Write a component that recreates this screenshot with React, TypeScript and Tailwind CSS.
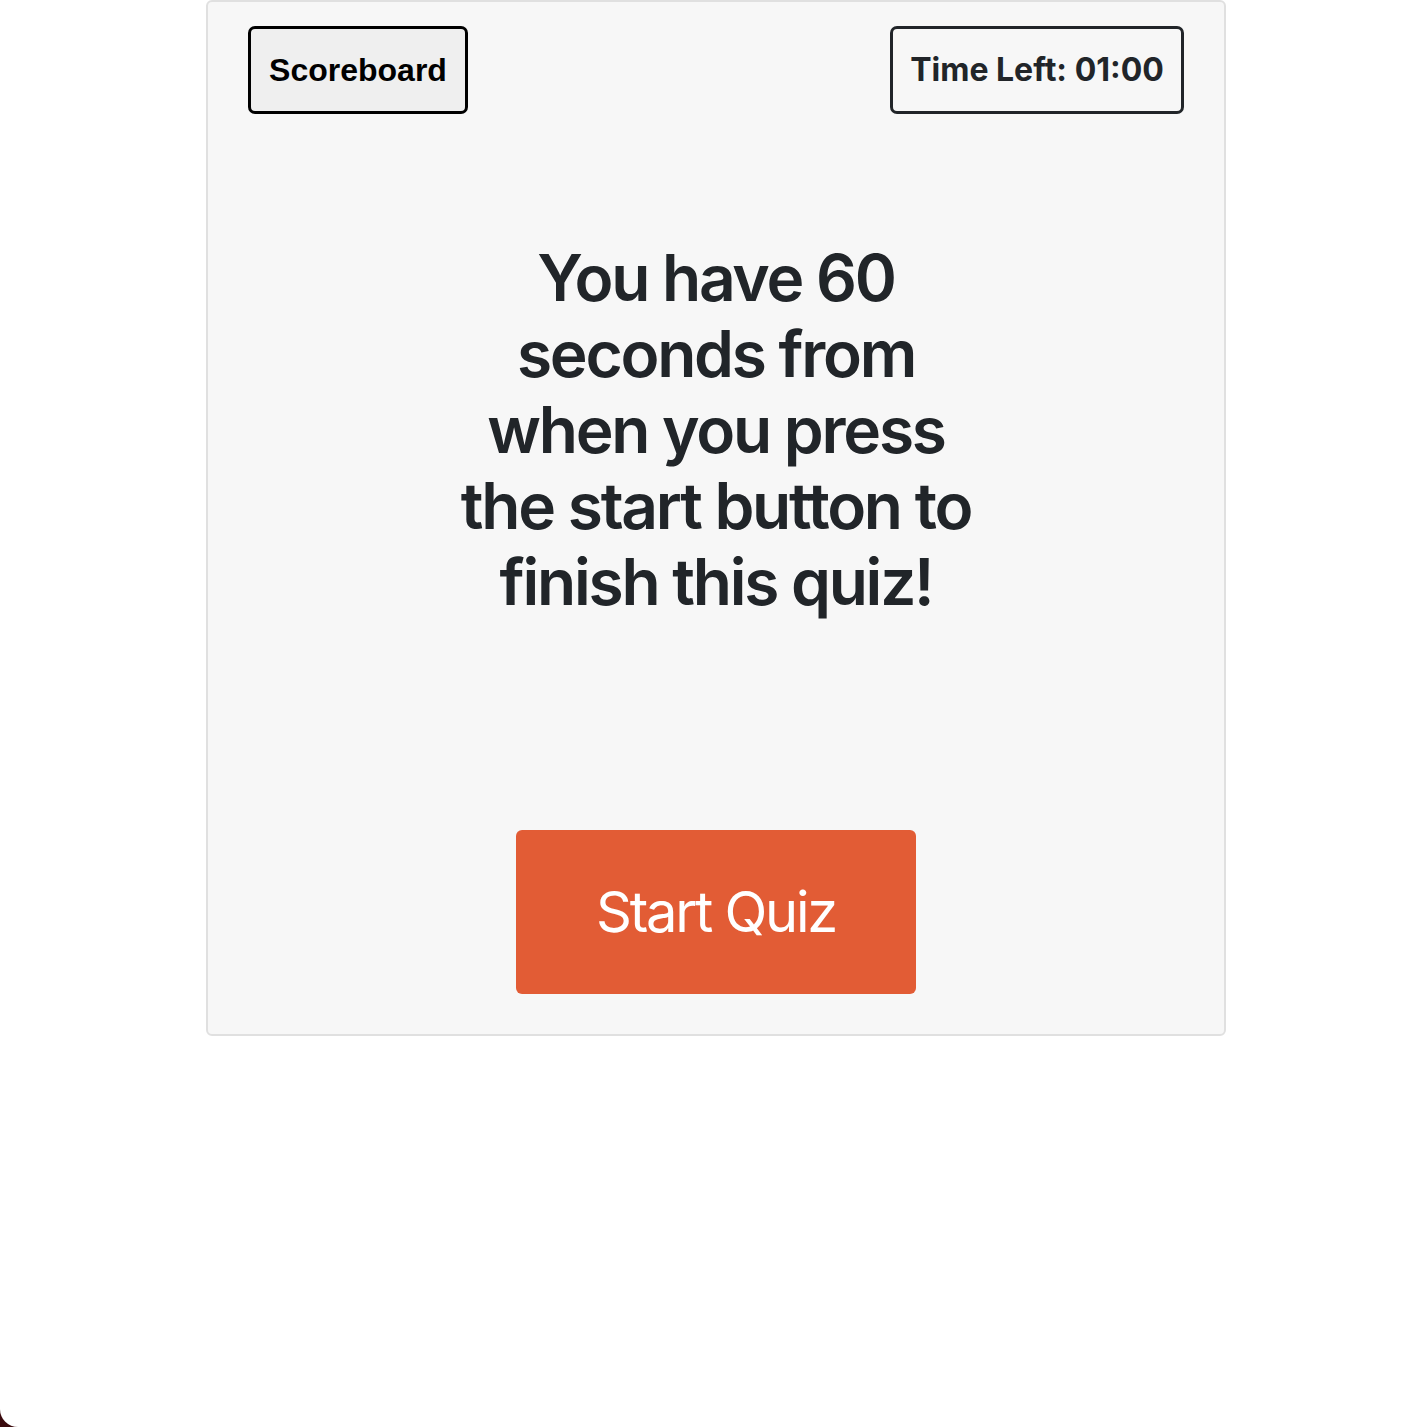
import React from "react";

export default function App() {
  return (
    <div className="h-[1427px] bg-[#3a0a0d]">
      <div className="h-[1427px] bg-white rounded-bl-[18px] overflow-hidden" style={{ fontFamily: "Inter, 'Noto Sans', sans-serif" }}>
        <div className="ml-[206px] w-[1020px] h-[1036px] bg-[#f7f7f7] border-2 border-[#e0e0e0] rounded-[6px] px-[40px] pt-[24px] flex flex-col">
          <div className="flex justify-between items-start">
            <button
              className="h-[88px] w-[220px] border-[3px] border-black rounded-[7px] bg-[#efefef] text-black font-bold text-[32px] flex items-center justify-center"
              style={{ fontFamily: "'Liberation Sans', Arial, sans-serif" }}
            >
              Scoreboard
            </button>
            <div className="h-[88px] w-[294px] border-[3px] border-[#212529] rounded-[7px] text-[#212529] font-bold text-[32px] flex items-center justify-center">
              Time Left: 01:00
            </div>
          </div>
          <h1 className="mt-[126px] text-center text-[64px] leading-[76px] font-semibold tracking-[-0.035em] text-[#212529] whitespace-nowrap">
            You have 60
            <br />
            seconds from
            <br />
            when you press
            <br />
            the start button to
            <br />
            finish this quiz!
          </h1>
          <div className="mt-[210px] flex justify-center">
            <button className="w-[400px] h-[164px] bg-[#e25c35] rounded-[6px] text-white text-[56px] font-normal tracking-[-0.04em]">
              Start Quiz
            </button>
          </div>
        </div>
      </div>
    </div>
  );
}
